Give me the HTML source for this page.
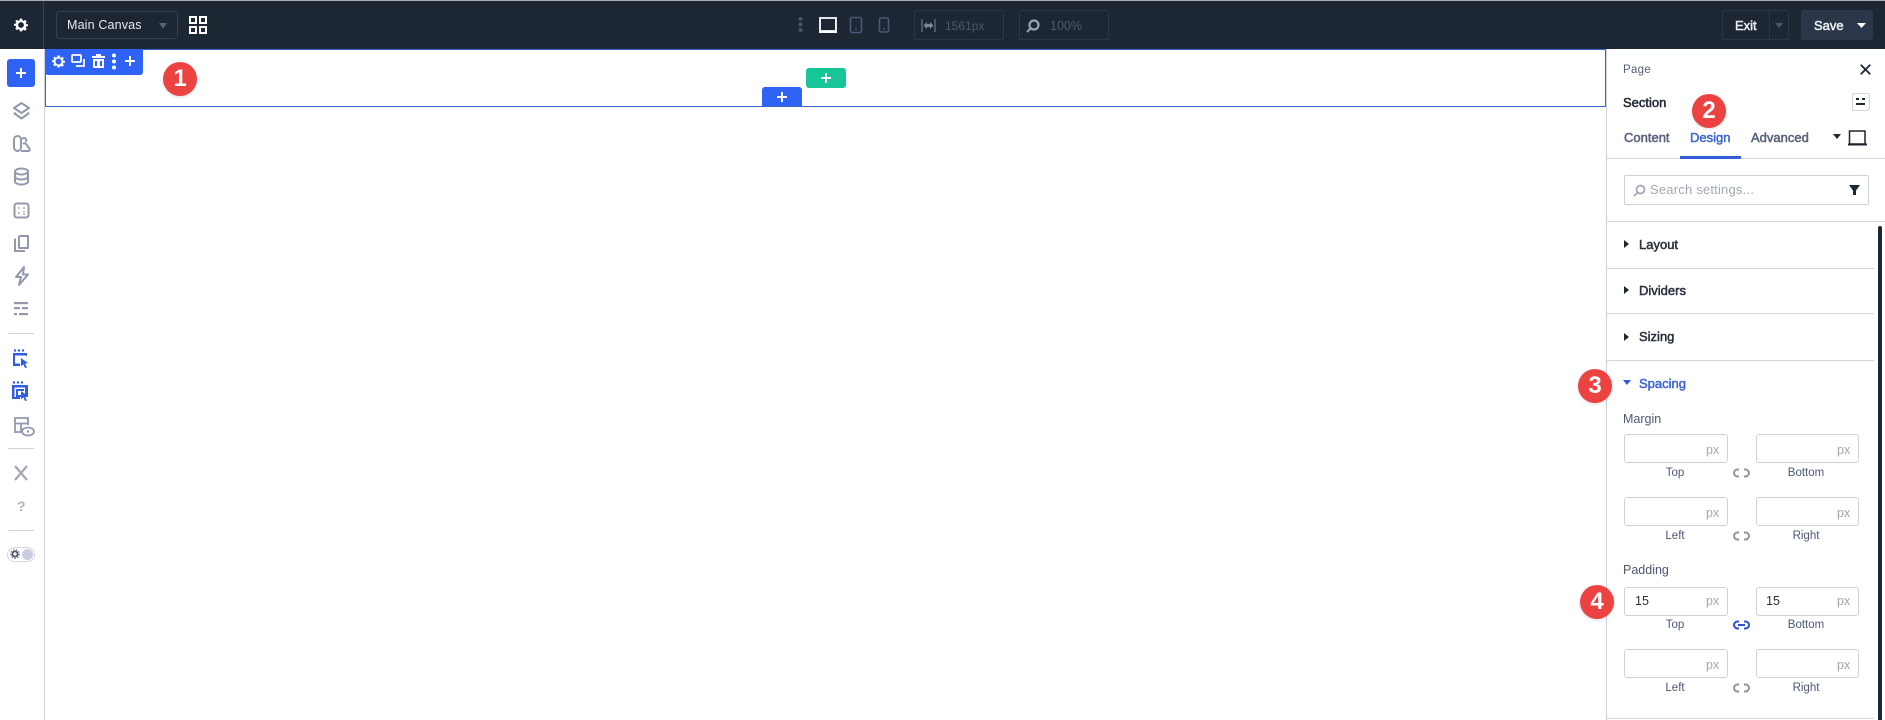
<!DOCTYPE html>
<html><head><meta charset="utf-8"><style>
html,body{margin:0;padding:0;background:#fff}
#r{position:relative;width:1885px;height:720px;overflow:hidden;background:#fff;font-family:"Liberation Sans",sans-serif}
#r div,#r svg{position:absolute}
.t{white-space:nowrap;line-height:16px;height:16px}
.lb{font-size:11.5px;color:#4c5872;text-align:center;width:80px}
.in{width:102px;height:27px;border:1px solid #cdd2da;border-radius:3px;background:#fff}
.in.r{width:101px}
.px{font-size:12.5px;color:#a0a7b4}
.b{width:34px;height:34px;border-radius:50%;background:#ec4242;color:#fff;font-weight:700;font-size:24px;line-height:34px;text-align:center;box-shadow:0 1px 3px rgba(0,0,0,.15)}
.hr{background:#d3d6da;height:1px}
.sb{left:8px;width:26px;height:1px;background:#cfd2d8}
.s{-webkit-text-stroke:.5px currentColor}
.h{font-size:13px;color:#29303d;-webkit-text-stroke:.5px currentColor}
</style></head><body><div id="r">

<div style="left:0;top:0;width:1885px;height:49px;background:#1d2633"></div>
<div style="left:0;top:0;width:1885px;height:1px;background:#a9adb3"></div>
<div style="left:43px;top:1px;width:1px;height:48px;background:#3a4454"></div>
<svg style="left:14px;top:18px" width="14" height="14" viewBox="0 0 24 24"><path fill="#fff" fill-rule="evenodd" d="M10 1h4l.6 3.100 1.800.8L19 3.200 21.800 6l-1.700 2.600.8 1.800L24 11v3l-3.100.6-.8 1.800 1.700 2.600-2.800 2.800-2.600-1.700-1.800.8L14 23h-4l-.6-3.100-1.800-.8L5 20.800 2.200 18l1.700-2.600-.8-1.800L0 13v-3l3.100-.6.800-1.800L2.200 5 5 3.200l2.600 1.700 1.800-.8zM12 7a5 5 0 1 0 0 10 5 5 0 0 0 0-10z"/></svg>

<div style="left:56px;top:11px;width:120px;height:26px;border:1px solid #364050;border-radius:3px"></div>
<div class="t" style="left:67px;top:17px;font-size:12.500px;color:#e8eaee;letter-spacing:.15px">Main Canvas</div>
<svg style="left:159px;top:23px" width="8" height="6"><path d="M0 0h8L4 5.500z" fill="#56647c"/></svg>
<svg style="left:189px;top:16px" width="18" height="18"><g fill="none" stroke="#fff" stroke-width="2"><rect x="1" y="1" width="6" height="6"/><rect x="11" y="1" width="6" height="6"/><rect x="1" y="11" width="6" height="6"/><rect x="11" y="11" width="6" height="6"/></g></svg>

<!-- center toolbar -->
<svg style="left:798px;top:16px" width="5" height="17"><g fill="#46546c"><circle cx="2.500" cy="3" r="2"/><circle cx="2.500" cy="8.500" r="2"/><circle cx="2.500" cy="14" r="2"/></g></svg>
<svg style="left:818px;top:16px" width="20" height="18"><path d="M2 2h16v13H2z" fill="none" stroke="#fff" stroke-width="1.800"/><path d="M1 15h18v2H1z" fill="#fff"/></svg>
<svg style="left:849px;top:16px" width="14" height="18"><rect x="1.500" y="1.500" width="11" height="15" rx="1.500" fill="none" stroke="#46587e" stroke-width="1.600"/><circle cx="7" cy="13" r="1" fill="#46587e"/></svg>
<svg style="left:878px;top:17px" width="12" height="16"><rect x="1.500" y="1" width="9" height="14" rx="1.500" fill="none" stroke="#46587e" stroke-width="1.600"/><circle cx="6" cy="12" r="1" fill="#46587e"/></svg>
<div style="left:914px;top:10px;width:88px;height:28px;border:1px solid #2d3645;border-radius:2px"></div>
<svg style="left:921px;top:19px" width="15" height="13"><path d="M1 0v13M14 0v13" stroke="#7a869b" stroke-width="1"/><path d="M2.500 6.500l3.500-3.500v2h3V3l3.500 3.500L9 10V8H6v2z" fill="#7a869b"/></svg>
<div class="t" style="left:945px;top:18px;font-size:12px;color:#4b586e">1561px</div>
<div style="left:1019px;top:10px;width:88px;height:28px;border:1px solid #2d3645;border-radius:2px"></div>
<svg style="left:1026px;top:19px" width="14" height="14"><circle cx="8" cy="6" r="4.500" fill="none" stroke="#9aa3b2" stroke-width="2.200"/><path d="M4.500 9.500L1 13" stroke="#9aa3b2" stroke-width="2"/></svg>
<div class="t" style="left:1050px;top:18px;font-size:12.500px;color:#4b586e">100%</div>

<!-- exit/save -->
<div style="left:1722px;top:10px;width:65px;height:28px;border:1px solid #2d3645;border-radius:2px"></div>
<div style="left:1769px;top:10px;width:1px;height:30px;background:#2d3645"></div>
<div class="t s" style="left:1735px;top:18px;font-size:13px;color:#eceef1">Exit</div>
<svg style="left:1775px;top:23px" width="8" height="5"><path d="M0 0h8L4 5z" fill="#4a566a"/></svg>
<div style="left:1801px;top:10px;width:72px;height:30px;background:#2b3648;border-radius:3px"></div>
<div class="t s" style="left:1814px;top:18px;font-size:13px;color:#eceef1">Save</div>
<svg style="left:1857px;top:23px" width="9" height="5"><path d="M0 0h9L4.500 5z" fill="#fff"/></svg>

<!-- left sidebar -->
<div style="left:44px;top:49px;width:1px;height:671px;background:#cfd2d7"></div>
<div style="left:7px;top:59px;width:28px;height:28px;background:#2f63f5;border-radius:3px"></div>
<svg style="left:16px;top:68px" width="10" height="10"><path d="M5 0v10M0 5h10" stroke="#fff" stroke-width="2"/></svg>
<svg style="left:12px;top:101px" width="19" height="19" fill="none" stroke="#9398ad" stroke-width="2"><path d="M9.500 2L17 7l-7.500 5L2 7z" stroke-linejoin="round"/><path d="M3.500 11.500L2.500 12.500l7 5 7-5-1-1" stroke-linejoin="round"/></svg>
<svg style="left:12px;top:134px" width="19" height="19" fill="none" stroke="#9398ad" stroke-width="2"><rect x="2" y="2" width="7" height="15" rx="3.500"/><path d="M10 5c2-2 5-1 4 3M9 17h7c2 0 2-2 1-3l-3-4c-1-1-2-1-3 0"/></svg>
<svg style="left:12px;top:167px" width="19" height="19" fill="none" stroke="#9398ad" stroke-width="2"><ellipse cx="9.500" cy="4.500" rx="6.500" ry="3"/><path d="M3 4.500v10c0 1.700 3 3 6.500 3s6.500-1.300 6.500-3v-10M3 9.500c0 1.700 3 3 6.500 3s6.500-1.300 6.500-3"/></svg>
<svg style="left:12px;top:201px" width="19" height="19" fill="none" stroke="#9398ad" stroke-width="2"><rect x="2.500" y="2.500" width="14" height="14" rx="2.500"/><path d="M6 7h2M11 7h2M6 12h2M11 10.800h2M11 13.200h2" stroke-width="1.200"/></svg>
<svg style="left:12px;top:234px" width="19" height="19" fill="none" stroke="#9398ad" stroke-width="2"><path d="M8 2h8v12H7V3z" stroke-linejoin="round"/><path d="M4 5.500H3v11.500h9v-1"/></svg>
<svg style="left:12px;top:265px" width="19" height="22" fill="none" stroke="#9398ad" stroke-width="2"><path d="M12 2L4 12h5l-2 8 9-10.500h-5z" stroke-linejoin="round"/></svg>
<svg style="left:13px;top:302px" width="16" height="14" fill="#9398ad"><rect x="1" y="0" width="14" height="2.200"/><rect x="1" y="5" width="6" height="2.200"/><rect x="9" y="5" width="6" height="2.200"/><rect x="1" y="11" width="3" height="2.200"/><rect x="6" y="11" width="9" height="2.200"/></svg>
<div class="sb" style="top:333px"></div>
<svg style="left:13px;top:349px" width="17" height="20"><g fill="#2f5ee0"><circle cx="2" cy="1.500" r="1.200"/><circle cx="6" cy="1.500" r="1.200"/><circle cx="10" cy="1.500" r="1.200"/><path d="M0 4h14v3h-1v-.5H2v8h5V17H0z"/><path d="M8 9l7 5-3 .7 2 3.800-2 .5-1.500-3.500L8 17z"/></g></svg>
<svg style="left:12px;top:381px" width="19" height="22"><g fill="#2f5ee0"><circle cx="2" cy="1.500" r="1.200"/><circle cx="6" cy="1.500" r="1.200"/><circle cx="10" cy="1.500" r="1.200"/><path d="M0 4h16v12h-3V6.500H2.500V16H8v2H0z"/><path d="M4 8h8v2H6v4h3v2H4z"/><path d="M9 10l7 5-3 .7 2 3.800-2 .5-1.500-3.500L9 18z"/></g></svg>
<svg style="left:13px;top:416px" width="22" height="22" fill="none" stroke="#9398ad" stroke-width="1.800"><path d="M12 16H2V2h13v7M2 7.500h13M8 7.500V16"/><ellipse cx="15" cy="15.500" rx="6" ry="4" fill="#fff"/><circle cx="15" cy="15.500" r="1.200" fill="#9398ad" stroke="none"/></svg>
<div class="sb" style="top:448px"></div>
<svg style="left:13px;top:465px" width="16" height="16" fill="none" stroke="#a3a8b8" stroke-width="2.200"><path d="M2 1l12 14M14 1L2 15"/></svg>
<div class="t" style="left:17px;top:498px;font-size:14px;font-weight:700;color:#b0b4c2">?</div>
<div class="sb" style="top:530px"></div>
<div style="left:7px;top:547px;width:26px;height:13px;border:1px solid #d3d6dc;border-radius:8px"></div>
<svg style="left:10px;top:549px" width="10" height="10"><circle cx="5" cy="5" r="2.600" fill="none" stroke="#4b5468" stroke-width="1.800"/><circle cx="5" cy="5" r="4.300" fill="none" stroke="#4b5468" stroke-width="1" stroke-dasharray="1.500 1.500"/></svg>
<div style="left:22px;top:549px;width:11px;height:11px;border-radius:50%;background:#c8cde0"></div>

<!-- section -->
<div style="left:45px;top:49px;width:1559px;height:56px;border:1px solid #3a66c8"></div>
<div style="left:45px;top:49px;width:98px;height:26px;background:#2f63f5;border-radius:0 0 3px 3px"></div>
<svg style="left:52px;top:55px" width="13" height="13" viewBox="0 0 24 24"><path fill="#fff" fill-rule="evenodd" d="M10 1h4l.6 3.100 1.800.8L19 3.200 21.800 6l-1.700 2.600.8 1.800L24 11v3l-3.100.6-.8 1.800 1.700 2.600-2.800 2.800-2.600-1.700-1.800.8L14 23h-4l-.6-3.100-1.800-.8L5 20.800 2.200 18l1.700-2.600-.8-1.800L0 13v-3l3.100-.6.800-1.800L2.200 5 5 3.200l2.600 1.700 1.800-.8zM12 6.500a5.500 5.500 0 1 0 0 11 5.500 5.500 0 0 0 0-11z"/></svg>
<svg style="left:71px;top:54px" width="15" height="14" fill="none" stroke="#fff" stroke-width="1.800"><rect x="1" y="1" width="9" height="7" rx="1"/><path d="M13 5v7H5"/></svg>
<svg style="left:92px;top:54px" width="13" height="14" fill="#fff"><path d="M4 0h5v2h4v2H0V2h4zM1 5h11v9H1zM3 7v5h2V7zM8 7v5h2V7z"/></svg>
<svg style="left:111px;top:53px" width="6" height="17" fill="#fff"><circle cx="3" cy="2.500" r="2"/><circle cx="3" cy="8.500" r="2"/><circle cx="3" cy="14.500" r="2"/></svg>
<svg style="left:125px;top:56px" width="10" height="10"><path d="M5 0v10M0 5h10" stroke="#fff" stroke-width="2"/></svg>
<div style="left:806px;top:68px;width:40px;height:20px;background:#17c696;border-radius:3px"></div>
<svg style="left:821px;top:73px" width="10" height="10"><path d="M5 0v10M0 5h10" stroke="#fff" stroke-width="2"/></svg>
<div style="left:762px;top:87px;width:40px;height:19px;background:#2f63f5;border-radius:3px 3px 0 0"></div>
<svg style="left:777px;top:92px" width="10" height="10"><path d="M5 0v10M0 5h10" stroke="#fff" stroke-width="2"/></svg>

<!-- panel -->
<div style="left:1606px;top:49px;width:279px;height:671px;background:#fff;border-left:1px solid #cfd2d7"></div>
<div class="t" style="left:1623px;top:62px;font-size:11.500px;color:#556079;letter-spacing:.3px">Page</div>
<svg style="left:1860px;top:64px" width="11" height="11"><path d="M.8.8l9.400 9.400M10.200.8L.8 10.200" stroke="#1d2633" stroke-width="1.800"/></svg>
<div class="t h" style="left:1623px;top:95px;color:#1d2633">Section</div>
<div style="left:1852px;top:93px;width:16px;height:16px;border:1px solid #d3d6dc;border-radius:2px"></div>
<svg style="left:1856px;top:97px" width="10" height="10" fill="#1d2633"><rect x="0" y="6" width="9" height="2"/><rect x="0" y="1" width="3" height="2"/><rect x="6" y="1" width="3" height="2"/></svg>
<div class="t s" style="left:1624px;top:130px;font-size:13px;color:#56617c">Content</div>
<div class="t s" style="left:1690px;top:130px;font-size:13px;color:#3f66cf">Design</div>
<div class="t s" style="left:1751px;top:130px;font-size:13px;color:#56617c">Advanced</div>
<svg style="left:1833px;top:134px" width="8" height="6"><path d="M0 0h8L4 5z" fill="#1d2633"/></svg>
<svg style="left:1847px;top:129px" width="21" height="18"><path d="M2.500 2h15.500v13H2.500z" fill="none" stroke="#1d2633" stroke-width="1.500"/><path d="M1 14.500h19V16.500H1z" fill="#1d2633"/></svg>
<div class="hr" style="left:1607px;top:158px;width:278px"></div>
<div style="left:1680px;top:156px;width:61px;height:3px;background:#2f5ed8"></div>
<div style="left:1624px;top:175px;width:243px;height:28px;border:1px solid #cdd2da;border-radius:2px"></div>
<svg style="left:1633px;top:184px" width="13" height="13"><circle cx="7.500" cy="5.500" r="4" fill="none" stroke="#a0a7b4" stroke-width="1.800"/><path d="M4.500 8.500L1 12" stroke="#a0a7b4" stroke-width="1.800"/></svg>
<div class="t" style="left:1650px;top:182px;font-size:13px;color:#a0a7b4;letter-spacing:.2px">Search settings...</div>
<svg style="left:1849px;top:185px" width="11" height="10"><path d="M0 0h11L7 5.500V10H4V5.500z" fill="#1d2633"/></svg>
<div class="hr" style="left:1607px;top:221px;width:278px"></div>

<svg style="left:1624px;top:240px" width="5" height="8"><path d="M0 0l5 4-5 4z" fill="#1d2633"/></svg>
<div class="t h" style="left:1639px;top:237px">Layout</div>
<div class="hr" style="left:1607px;top:268px;width:267px"></div>
<svg style="left:1624px;top:286px" width="5" height="8"><path d="M0 0l5 4-5 4z" fill="#1d2633"/></svg>
<div class="t h" style="left:1639px;top:283px">Dividers</div>
<div class="hr" style="left:1607px;top:313px;width:267px"></div>
<svg style="left:1624px;top:333px" width="5" height="8"><path d="M0 0l5 4-5 4z" fill="#1d2633"/></svg>
<div class="t h" style="left:1639px;top:329px">Sizing</div>
<div class="hr" style="left:1607px;top:360px;width:267px"></div>
<div style="left:1878px;top:226px;width:4px;height:494px;background:#1d2633;border-radius:2px 2px 0 0"></div>

<svg style="left:1623px;top:380px" width="8" height="6"><path d="M0 0h8L4 5z" fill="#2f5ed8"/></svg>
<div class="t h" style="left:1639px;top:376px;color:#3f66cf">Spacing</div>

<div class="t" style="left:1623px;top:411px;font-size:12.500px;color:#4c5872">Margin</div>
<div class="in" style="left:1624px;top:434px"></div><div class="t px" style="left:1706px;top:442px">px</div>
<div class="in r" style="left:1756px;top:434px"></div><div class="t px" style="left:1837px;top:442px">px</div>
<div class="t lb" style="left:1635px;top:465px">Top</div><div class="t lb" style="left:1766px;top:465px">Bottom</div>
<svg style="left:1732px;top:468px" width="19" height="10" fill="none" stroke="#8d93a8" stroke-width="2"><path d="M7 1.500H5.500a3.500 3.500 0 0 0 0 7H7M12 1.500h1.500a3.500 3.500 0 0 1 0 7H12"/></svg>
<div class="in" style="left:1624px;top:497px"></div><div class="t px" style="left:1706px;top:505px">px</div>
<div class="in r" style="left:1756px;top:497px"></div><div class="t px" style="left:1837px;top:505px">px</div>
<div class="t lb" style="left:1635px;top:528px">Left</div><div class="t lb" style="left:1766px;top:528px">Right</div>
<svg style="left:1732px;top:531px" width="19" height="10" fill="none" stroke="#8d93a8" stroke-width="2"><path d="M7 1.500H5.500a3.500 3.500 0 0 0 0 7H7M12 1.500h1.500a3.500 3.500 0 0 1 0 7H12"/></svg>

<div class="t" style="left:1623px;top:562px;font-size:12.500px;color:#4c5872">Padding</div>
<div class="in" style="left:1624px;top:587px"></div><div class="t" style="left:1635px;top:593px;font-size:12.500px;color:#29303d">15</div><div class="t px" style="left:1706px;top:593px">px</div>
<div class="in r" style="left:1756px;top:587px"></div><div class="t" style="left:1766px;top:593px;font-size:12.500px;color:#29303d">15</div><div class="t px" style="left:1837px;top:593px">px</div>
<div class="t lb" style="left:1635px;top:617px">Top</div><div class="t lb" style="left:1766px;top:617px">Bottom</div>
<svg style="left:1732px;top:620px" width="19" height="10" fill="none" stroke="#2f4fd8" stroke-width="2"><path d="M7 1.500H5.500a3.500 3.500 0 0 0 0 7H7M12 1.500h1.500a3.500 3.500 0 0 1 0 7H12M6 5h7"/></svg>
<div class="in" style="left:1624px;top:649px"></div><div class="t px" style="left:1706px;top:657px">px</div>
<div class="in r" style="left:1756px;top:649px"></div><div class="t px" style="left:1837px;top:657px">px</div>
<div class="t lb" style="left:1635px;top:680px">Left</div><div class="t lb" style="left:1766px;top:680px">Right</div>
<svg style="left:1732px;top:683px" width="19" height="10" fill="none" stroke="#8d93a8" stroke-width="2"><path d="M7 1.500H5.500a3.500 3.500 0 0 0 0 7H7M12 1.500h1.500a3.500 3.500 0 0 1 0 7H12"/></svg>
<div class="hr" style="left:1607px;top:718px;width:267px"></div>

<!-- badges -->
<div class="b" style="left:163px;top:62px">1</div>
<div class="b" style="left:1692px;top:94px">2</div>
<div class="b" style="left:1578px;top:369px">3</div>
<div class="b" style="left:1580px;top:585px">4</div>
</div></body></html>
